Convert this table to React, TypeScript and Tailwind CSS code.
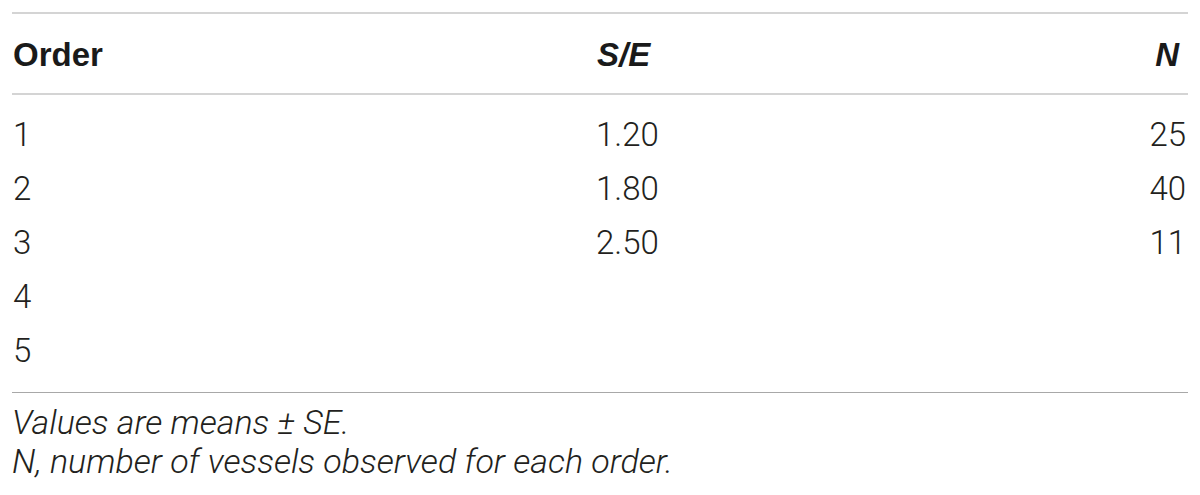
import React from "react"

const rows = [
  { order: "1", se: "1.20", n: "25" },
  { order: "2", se: "1.80", n: "40" },
  { order: "3", se: "2.50", n: "11" },
  { order: "4", se: "", n: "" },
  { order: "5", se: "", n: "" },
]

export default function App() {
  return (
    <div className="w-[1200px] h-[495px] bg-white px-[12px] pt-[12px] text-[#231f20] font-['Roboto','Liberation_Sans',sans-serif]">
      {/* Header */}
      <div className="border-t-2 border-b-2 border-[#d4d4d4] pt-[14px] pb-[11px]">
        <div className="grid grid-cols-[584px_1fr_auto] h-[54px] leading-[54px] text-[33px] font-bold pr-[9px] font-['Liberation_Sans',sans-serif] text-[#1a1a1a]">
          <div className="pl-[1px]">Order</div>
          <div className="italic pl-[1px]">S/E</div>
          <div className="italic">N</div>
        </div>
      </div>

      {/* Body */}
      <div className="border-b border-[#a8a8a8] pt-[13px] pb-[14px]">
        {rows.map((r) => (
          <div key={r.order} className="grid grid-cols-[584px_1fr_auto] h-[54px] leading-[54px] text-[33px] font-light pr-[2px]">
            <div className="pl-[1px]">{r.order}</div>
            <div>{r.se}</div>
            <div className="text-right">{r.n}</div>
          </div>
        ))}
      </div>

      {/* Footnotes */}
      <div className="pt-[10px] text-[34px] leading-[39px] italic font-light">
        <p>Values are means ± SE.</p>
        <p>N, number of vessels observed for each order.</p>
      </div>
    </div>
  )
}
